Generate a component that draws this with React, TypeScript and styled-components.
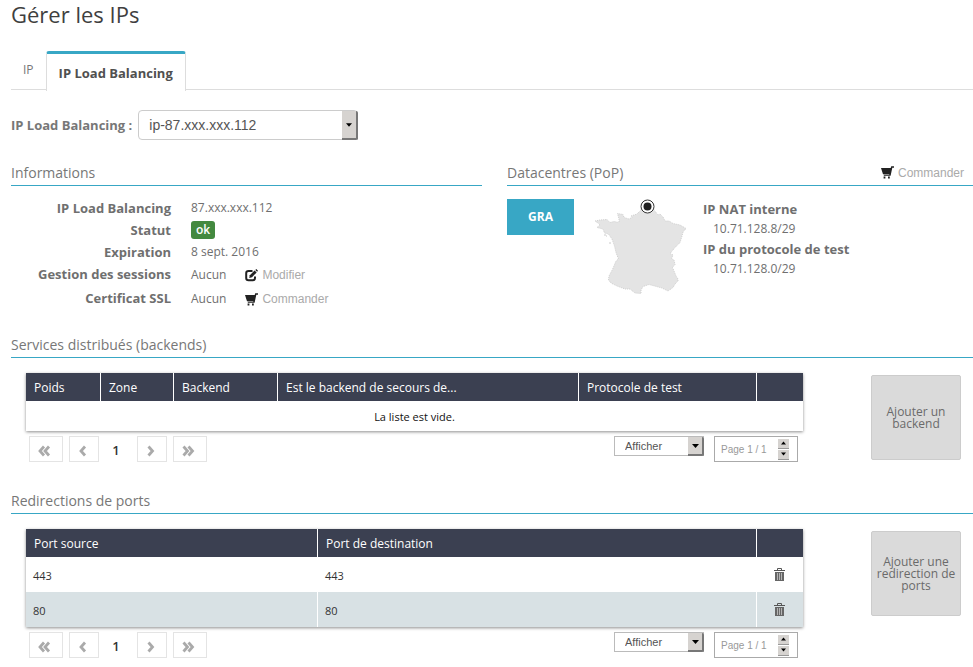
import React from "react";
import styled, { createGlobalStyle } from "styled-components";

const GlobalStyle = createGlobalStyle`
  * { box-sizing: border-box; }
  body {
    margin: 0;
    background: #fff;
    color: #6f6f6f;
    font: 12px/20px "Open Sans", "Noto Sans", sans-serif;
  }
  button, select, input { font: inherit; color: inherit; margin: 0; }
  button { cursor: pointer; }
`;

const Page = styled.main`
  padding-left: 11px;
`;

const Title = styled.h1`
  margin: 0;
  font-size: 22px;
  line-height: 29px;
  font-weight: 400;
  color: #3f3f3f;
`;

const Tabs = styled.nav`
  display: flex;
  align-items: flex-end;
  margin-top: 22px;
  height: 39px;
  border-bottom: 1px solid #ddd;
`;

const Tab = styled.button<{ $active?: boolean }>`
  height: ${(p) => (p.$active ? 40 : 38)}px;
  margin-bottom: ${(p) => (p.$active ? -2 : 0)}px;
  padding: 0 12px;
  border: solid ${(p) => (p.$active ? "#ddd" : "transparent")};
  border-width: 0 ${(p) => (p.$active ? 1 : 0)}px;
  border-top: ${(p) => (p.$active ? "3px solid #38a7c5" : "0")};
  border-radius: 3px 3px 0 0;
  background: ${(p) => (p.$active ? "#fff" : "transparent")};
  font-size: ${(p) => (p.$active ? 13 : 12)}px;
  font-weight: ${(p) => (p.$active ? 700 : 400)};
  color: ${(p) => (p.$active ? "#505050" : "#777")};
`;

const Chooser = styled.div`
  display: flex;
  align-items: center;
  gap: 6px;
  margin-top: 20px;
  font-size: 13px;
  font-weight: 700;
  color: #777;
`;

const SelectWrap = styled.span<{ $small?: boolean }>`
  position: relative;
  display: inline-block;
  width: ${(p) => (p.$small ? 90 : 220)}px;
  height: ${(p) => (p.$small ? 20 : 30)}px;
`;

const Select = styled.select<{ $small?: boolean }>`
  appearance: none;
  display: block;
  width: 100%;
  height: 100%;
  padding: 0 20px 0 10px;
  border: 1px solid ${(p) => (p.$small ? "#bbb" : "#ccc")};
  border-radius: ${(p) => (p.$small ? 0 : 4)}px;
  background: #fff;
  color: #555;
  font: ${(p) => (p.$small ? 11 : 14)}px "Liberation Sans", Arial, sans-serif;
`;

const SelectArrow = styled.span`
  position: absolute;
  top: 1px;
  right: 0;
  bottom: 0;
  width: 16px;
  display: flex;
  align-items: center;
  justify-content: center;
  background: #d6d3d0;
  border: solid #777;
  border-width: 0 2px 2px 0;
  border-radius: 0 2px 2px 0;
  pointer-events: none;
`;

const Columns = styled.div`
  display: grid;
  grid-template-columns: 471fr 466fr;
  gap: 25px;
  margin-top: 20px;
`;

const SectionHead = styled.header`
  display: flex;
  justify-content: space-between;
  align-items: center;
  height: 26px;
  padding-right: 9px;
  border-bottom: 1px solid #38a7c5;
`;

const SectionTitle = styled.h2`
  margin: 0;
  font-size: 14px;
  line-height: 24px;
  font-weight: 400;
  color: #777;
`;

const ActionLink = styled.a`
  display: inline-flex;
  align-items: center;
  gap: 4px;
  color: #aaa;
  font: 12px/20px "Liberation Sans", Arial, sans-serif;
  text-decoration: none;
`;

const InfoList = styled.dl`
  display: grid;
  grid-template-columns: 160px 1fr;
  column-gap: 20px;
  row-gap: 2px;
  margin: 12px 0 0;
`;

const InfoLabel = styled.dt`
  text-align: right;
  font-size: 13px;
  font-weight: 700;
`;

const InfoValue = styled.dd<{ $action?: boolean }>`
  display: flex;
  align-items: center;
  gap: 19px;
  height: ${(p) => (p.$action ? 22 : 20)}px;
  margin: 0;
`;

const Badge = styled.span`
  padding: 0 5px;
  border-radius: 3px;
  background: #43893f;
  color: #fff;
  font-weight: 600;
  line-height: 18px;
`;

const Pop = styled.div`
  display: flex;
  align-items: flex-start;
  margin-top: 13px;
`;

const PopButton = styled.button`
  width: 67px;
  height: 36px;
  margin-right: 20px;
  border: 0;
  background: #38a7c5;
  color: #fff;
  font-weight: 700;
`;

const MapSvg = styled.svg`
  display: block;
  margin-right: 16px;
`;

const PopList = styled.dl`
  margin: 0;
`;

const PopLabel = styled.dt`
  font-size: 13px;
  font-weight: 700;
`;

const PopValue = styled.dd`
  margin: 0 0 0 10px;
`;

const Section = styled.section<{ $gap: number }>`
  margin-top: ${(p) => p.$gap}px;
`;

const SectionBody = styled.div`
  display: flex;
  align-items: flex-start;
  gap: 68px;
  padding: 15px 12px 0 15px;
`;

const TableArea = styled.div`
  flex: 1;
  min-width: 0;
`;

const Table = styled.table`
  width: 100%;
  table-layout: fixed;
  border-collapse: separate;
  border-spacing: 0;
  box-shadow: 0 1px 3px rgba(0, 0, 0, 0.45);
`;

const Col = styled.col<{ $width?: number }>`
  width: ${(p) => (p.$width ? `${p.$width}px` : "auto")};
`;

const HeadCell = styled.th`
  height: 28px;
  padding: 2px 8px 0;
  background: #3b4051;
  color: #fff;
  font-weight: 400;
  text-align: left;
  & + & { border-left: 1px solid #fff; }
`;

const Row = styled.tr`
  height: 35px;
  color: #333;
  &:nth-child(even) { background: #d8e1e4; }
`;

const Cell = styled.td`
  padding: 2px 7px 0;
  font-size: 11px;
  & + & { border-left: 1px solid #fff; }
`;

const IconCell = styled(Cell)`
  padding: 0 8px 0 6px;
  border-left: 1px solid #fff;
`;

const EmptyCell = styled.td`
  height: 30px;
  padding: 2px 0 0;
  font-size: 11px;
  color: #111;
  text-align: center;
`;

const TrashButton = styled.button`
  display: flex;
  margin: 0 auto;
  padding: 0;
  border: 0;
  background: none;
`;

const Pager = styled.div`
  display: flex;
  align-items: flex-start;
  gap: 6px;
  padding: 5px 5px 0 3px;
`;

const PageButton = styled.button<{ $wide?: boolean }>`
  display: flex;
  align-items: center;
  justify-content: center;
  width: ${(p) => (p.$wide ? 34 : 30)}px;
  height: 26px;
  padding: 3px 3px 0 0;
  border: 1px solid #e4e4e4;
  background: #fff;
`;

const CurrentPage = styled.span`
  width: 26px;
  padding-right: 4px;
  line-height: 28px;
  font-size: 13px;
  font-weight: 600;
  color: #333;
  text-align: center;
`;

const PagerTools = styled.div`
  display: flex;
  gap: 10px;
  margin-left: auto;
`;

const Stepper = styled.div`
  display: flex;
  align-items: center;
  justify-content: space-between;
  width: 84px;
  height: 26px;
  padding: 0 8px 0 6px;
  border: 1px solid #aaa;
`;

const StepInput = styled.input`
  width: 54px;
  padding: 0;
  border: 0;
  color: #999;
  font: 10px "Liberation Sans", Arial, sans-serif;
`;

const StepButtons = styled.span`
  display: flex;
  flex-direction: column;
  gap: 1px;
`;

const StepButton = styled.button`
  display: flex;
  align-items: center;
  justify-content: center;
  width: 11px;
  height: 10px;
  padding: 0;
  border: 0;
  border-bottom: 1px solid #999;
  background: #d6d3d0;
`;

const AddButton = styled.button`
  flex: none;
  width: 90px;
  height: 85px;
  margin-top: 2px;
  padding: 0 4px;
  border: 1px solid #ccc;
  border-radius: 2px;
  background: #dadada;
  color: #6a6a6a;
  line-height: 12px;
`;

const EditIcon = () => (
  <svg width="13" height="13" viewBox="0 0 13 13" aria-hidden="true">
    <path d="M7.500 2H3.500Q1.200 2 1.200 4.200v4.800q0 2.300 2.300 2.300H7.800q2.200 0 2.200-2.300V7.500" fill="none" stroke="#222" strokeWidth="2" />
    <path d="M4.200 9l.6-2.800L9.600 1.400l2 2L7 8.300z" fill="#222" />
    <path d="M10.300.9l1-.9 1.700 1.700-.9 1z" fill="#222" />
  </svg>
);

const CartIcon = () => (
  <svg width="13" height="13" viewBox="0 0 13 13" aria-hidden="true">
    <path d="M0 2h9.700L10.200.3H13v1.400h-1.700L9.600 9.800H2.800v-1h5.400L8.400 8.200H2z" fill="#222" />
    <path d="M2.600 10.600h1.800v1.800H2.600zM7 10.600h1.800v1.800H7z" fill="#222" />
  </svg>
);

const TrashIcon = () => (
  <svg width="11" height="13" viewBox="0 0 11 13" aria-hidden="true">
    <path d="M3.500 2V.5h4V2M0 2.500h11" fill="none" stroke="#555" />
    <path d="M1 4h9v9H1z" fill="#666" />
    <path d="M3.500 5v7M5.500 5v7M7.500 5v7" stroke="#b4b4b4" />
  </svg>
);

const Caret = ({ up, size = 7 }: { up?: boolean; size?: number }) => (
  <svg width={size} height="4" viewBox="0 0 7 4" aria-hidden="true">
    <path d={up ? "M0 4h7L3.500 0z" : "M0 0h7L3.500 4z"} fill="#000" />
  </svg>
);

const Chevrons = ({ double, right }: { double?: boolean; right?: boolean }) => {
  const single = right ? "M1.500 1.500L5.500 6l-4 4.500" : "M6 1.500L2 6l4 4.500";
  return (
    <svg width={double ? 13 : 8} height="12" viewBox={double ? "0 0 13 12" : "0 0 8 12"} aria-hidden="true">
      <g fill="none" stroke="#aaa" strokeWidth="2.800">
        <path d={single} />
        {double && <path d={single} transform="translate(5 0)" />}
      </g>
    </svg>
  );
};

const FranceMap = () => (
  <MapSvg width="93" height="96" viewBox="594 199 93 96" role="img" aria-label="France">
    <path
      d="M595 221L600 220 607 219.500 610 222.500 614 221.500 619 222.500 619 219 617.500 213.500 623 214.500 624 217.500 629 219 632 217.500 631 216 637 214 641 210 643 205 651 205 654 210 658 215 660 214 663 217 665 221 669 221 673 223.500 680 225 686 228.500 683 232 682 236 680 242.500 675 247.500 670 253.500 673 255 671.500 258.500 674 260 675 264.500 672.500 267.500 674 271 676 276 678 279 678 281 675 284 673 287.500 668 291 662 288 656.500 286.500 649 284.500 643 286.500 641 290 641 293.500 635 293 630 289 625 289 617 286 611 283 608.500 280 609 276 612.500 269.500 616 261 618.500 259 616 252.500 614.500 246 612 239 608.500 234 604.500 233 603 229 597 227.500 600 225 598 223z"
      fill="#e4e4e4"
      stroke="#cfcfcf"
      strokeWidth="1"
      strokeDasharray="1 1"
    />
    <path d="M604 235h2M606 236h1M609 243h2" stroke="#ccc" />
    <circle cx="647.500" cy="206.500" r="6.500" fill="#fff" stroke="#333" />
    <circle cx="647.500" cy="206.500" r="4" fill="#222" />
  </MapSvg>
);

type DropdownProps = { id: string; label?: string; option: string; small?: boolean };

const Dropdown = ({ id, label, option, small }: DropdownProps) => (
  <SelectWrap $small={small}>
    <Select id={id} aria-label={label} $small={small}>
      <option>{option}</option>
    </Select>
    <SelectArrow>
      <Caret size={small ? 7 : 6} />
    </SelectArrow>
  </SelectWrap>
);

const Pagination = ({ name }: { name: string }) => (
  <Pager>
    <PageButton $wide aria-label="Première page"><Chevrons double /></PageButton>
    <PageButton aria-label="Page précédente"><Chevrons /></PageButton>
    <CurrentPage>1</CurrentPage>
    <PageButton aria-label="Page suivante"><Chevrons right /></PageButton>
    <PageButton $wide aria-label="Dernière page"><Chevrons double right /></PageButton>
    <PagerTools>
      <Dropdown id={`${name}-size`} label="Afficher" option="Afficher" small />
      <Stepper>
        <StepInput aria-label="Page" defaultValue="Page 1 / 1" />
        <StepButtons>
          <StepButton aria-label="Augmenter"><Caret up size={5} /></StepButton>
          <StepButton aria-label="Diminuer"><Caret size={5} /></StepButton>
        </StepButtons>
      </Stepper>
    </PagerTools>
  </Pager>
);

const backendColumns = [
  { title: "Poids", width: 74 },
  { title: "Zone", width: 73 },
  { title: "Backend", width: 104 },
  { title: "Est le backend de secours de..." },
  { title: "Protocole de test", width: 178 },
  { title: "", width: 47 },
];

const redirections = [
  { source: "443", target: "443" },
  { source: "80", target: "80" },
];

export default function App() {
  return (
    <>
      <GlobalStyle />
      <Page>
        <Title>Gérer les IPs</Title>
        <Tabs>
          <Tab>IP</Tab>
          <Tab $active>IP Load Balancing</Tab>
        </Tabs>
        <Chooser>
          <label htmlFor="iplb">IP Load Balancing :</label>
          <Dropdown id="iplb" option="ip-87.xxx.xxx.112" />
        </Chooser>

        <Columns>
          <section>
            <SectionHead>
              <SectionTitle>Informations</SectionTitle>
            </SectionHead>
            <InfoList>
              <InfoLabel>IP Load Balancing</InfoLabel>
              <InfoValue>87.xxx.xxx.112</InfoValue>
              <InfoLabel>Statut</InfoLabel>
              <InfoValue><Badge>ok</Badge></InfoValue>
              <InfoLabel>Expiration</InfoLabel>
              <InfoValue>8 sept. 2016</InfoValue>
              <InfoLabel>Gestion des sessions</InfoLabel>
              <InfoValue $action>
                Aucun
                <ActionLink href="#sessions"><EditIcon />Modifier</ActionLink>
              </InfoValue>
              <InfoLabel>Certificat SSL</InfoLabel>
              <InfoValue $action>
                Aucun
                <ActionLink href="#ssl"><CartIcon />Commander</ActionLink>
              </InfoValue>
            </InfoList>
          </section>
          <section>
            <SectionHead>
              <SectionTitle>Datacentres (PoP)</SectionTitle>
              <ActionLink href="#pop"><CartIcon />Commander</ActionLink>
            </SectionHead>
            <Pop>
              <PopButton>GRA</PopButton>
              <FranceMap />
              <PopList>
                <PopLabel>IP NAT interne</PopLabel>
                <PopValue>10.71.128.8/29</PopValue>
                <PopLabel>IP du protocole de test</PopLabel>
                <PopValue>10.71.128.0/29</PopValue>
              </PopList>
            </Pop>
          </section>
        </Columns>

        <Section $gap={22}>
          <SectionHead>
            <SectionTitle>Services distribués (backends)</SectionTitle>
          </SectionHead>
          <SectionBody>
            <TableArea>
              <Table>
                <colgroup>
                  {backendColumns.map((c, i) => <Col key={i} $width={c.width} />)}
                </colgroup>
                <thead>
                  <tr>
                    {backendColumns.map((c, i) => <HeadCell key={i}>{c.title}</HeadCell>)}
                  </tr>
                </thead>
                <tbody>
                  <tr><EmptyCell colSpan={6}>La liste est vide.</EmptyCell></tr>
                </tbody>
              </Table>
              <Pagination name="backends" />
            </TableArea>
            <AddButton>Ajouter un backend</AddButton>
          </SectionBody>
        </Section>

        <Section $gap={24}>
          <SectionHead>
            <SectionTitle>Redirections de ports</SectionTitle>
          </SectionHead>
          <SectionBody>
            <TableArea>
              <Table>
                <colgroup>
                  <Col $width={291} />
                  <Col />
                  <Col $width={47} />
                </colgroup>
                <thead>
                  <tr>
                    <HeadCell>Port source</HeadCell>
                    <HeadCell>Port de destination</HeadCell>
                    <HeadCell />
                  </tr>
                </thead>
                <tbody>
                  {redirections.map((r) => (
                    <Row key={r.source}>
                      <Cell>{r.source}</Cell>
                      <Cell>{r.target}</Cell>
                      <IconCell>
                        <TrashButton aria-label={`Supprimer ${r.source}`}><TrashIcon /></TrashButton>
                      </IconCell>
                    </Row>
                  ))}
                </tbody>
              </Table>
              <Pagination name="redirections" />
            </TableArea>
            <AddButton>Ajouter une redirection de ports</AddButton>
          </SectionBody>
        </Section>
      </Page>
    </>
  );
}
